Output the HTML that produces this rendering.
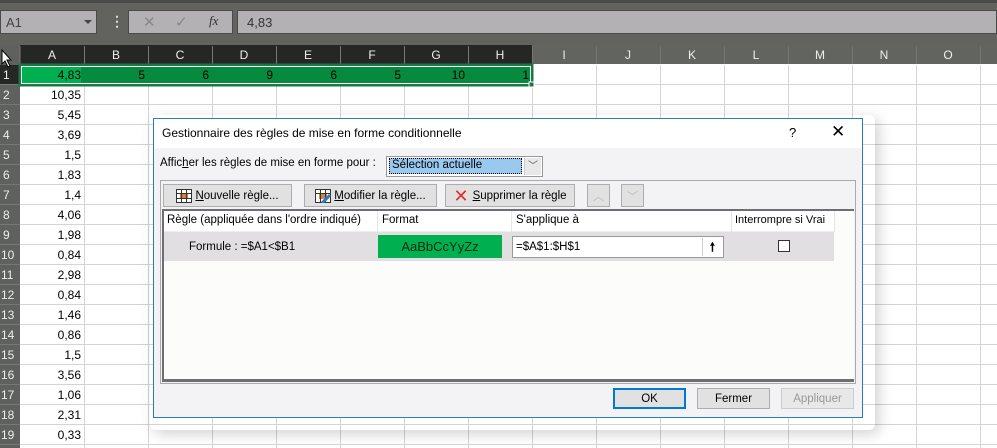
<!DOCTYPE html>
<html><head><meta charset="utf-8"><style>
*{box-sizing:border-box;margin:0;padding:0}
body{width:997px;height:448px;overflow:hidden;background:#fff;font-family:"Liberation Sans",sans-serif;position:relative}
.a{position:absolute}
.t{font-size:11.5px;color:#000;white-space:nowrap}
.btn{position:absolute;background:#e1e1e1;border:1px solid #adadad;font-size:11.5px;display:flex;align-items:center;justify-content:center;white-space:nowrap}
</style></head><body>
<div class="a" style="left:0;top:0;width:997px;height:45px;background:#62635f;border-top:3px solid #4a4a4a"></div>
<div class="a" style="left:0;top:10px;width:97px;height:24px;background:#b3b1b4;border:1px solid #4a4a4a"></div>
<div class="a t" style="left:6px;top:15px;font-size:13px;color:#444">A1</div>
<div class="a" style="left:84px;top:20px;border-left:4px solid transparent;border-right:4px solid transparent;border-top:4px solid #444"></div>
<div class="a" style="left:110px;top:13px;color:#ddd;font-size:14px;font-weight:bold">⋮</div>
<div class="a" style="left:128px;top:10px;width:105px;height:24px;background:#b3b1b4;border:1px solid #4a4a4a"></div>
<div class="a" style="left:143px;top:13px;color:#888;font-size:15px">✕</div>
<div class="a" style="left:175px;top:13px;color:#888;font-size:15px">✓</div>
<div class="a" style="left:209px;top:13px;color:#333;font-size:13px;font-style:italic;font-family:'Liberation Serif',serif">fx</div>
<div class="a" style="left:237px;top:10px;width:760px;height:24px;background:#b3b1b4;border:1px solid #4a4a4a"></div>
<div class="a t" style="left:247px;top:15px;font-size:13px;color:#333">4,83</div>
<svg class="a" style="left:0;top:45px" width="997" height="403">
<rect x="0" y="0" width="997" height="19" fill="#626460"/>
<rect x="20" y="0" width="512" height="19" fill="#252725"/>
<rect x="0" y="0" width="20" height="403" fill="#5f615e"/>
<rect x="0" y="20" width="20" height="20" fill="#252725"/>
<g stroke="#d4d4d4" stroke-width="1">
<path d="M84.5 40V403M148.5 40V403M212.5 40V403M276.5 40V403M340.5 40V403M404.5 40V403M468.5 40V403M532.5 20V403M596.5 20V403M660.5 20V403M724.5 20V403M788.5 20V403M852.5 20V403M916.5 20V403M980.5 20V403"/>
<path d="M20 59.5H997M20 79.5H997M20 99.5H997M20 119.5H997M20 139.5H997M20 159.5H997M20 179.5H997M20 199.5H997M20 219.5H997M20 239.5H997M20 259.5H997M20 279.5H997M20 299.5H997M20 319.5H997M20 339.5H997M20 359.5H997M20 379.5H997M20 399.5H997M532 39.5H997"/>
</g>
<g stroke="#777"><path d="M20 1v18M84.5 1v18M148.5 1v18M212.5 1v18M276.5 1v18M340.5 1v18M404.5 1v18M468.5 1v18M532.5 1v18M596.5 1v18M660.5 1v18M724.5 1v18M788.5 1v18M852.5 1v18M916.5 1v18M980.5 1v18"/>
<path d="M0 39.5h20M0 59.5h20M0 79.5h20M0 99.5h20M0 119.5h20M0 139.5h20M0 159.5h20M0 179.5h20M0 199.5h20M0 219.5h20M0 239.5h20M0 259.5h20M0 279.5h20M0 299.5h20M0 319.5h20M0 339.5h20M0 359.5h20M0 379.5h20M0 399.5h20"/></g>
<rect x="20" y="20" width="512" height="20" fill="#058a3e"/>
<rect x="21" y="21" width="60" height="18" fill="#00b050"/>
<rect x="19.5" y="19.5" width="513" height="21" fill="none" stroke="#217346" stroke-width="2"/>
<rect x="21.5" y="21.5" width="509" height="17" fill="none" stroke="#fff" stroke-width="1"/>
<rect x="529" y="37" width="5" height="5" fill="#217346" stroke="#fff"/>
<g font-family="Liberation Sans" font-size="12" fill="#eee" text-anchor="middle">
<text x="52" y="14">A</text><text x="116" y="14">B</text><text x="180" y="14">C</text><text x="244" y="14">D</text><text x="308" y="14">E</text><text x="372" y="14">F</text><text x="436" y="14">G</text><text x="500" y="14">H</text><text x="564" y="14">I</text><text x="628" y="14">J</text><text x="692" y="14">K</text><text x="756" y="14">L</text><text x="820" y="14">M</text><text x="884" y="14">N</text><text x="948" y="14">O</text>
</g>
<g font-family="Liberation Sans" font-size="12" fill="#eee">
<text x="3" y="34">1</text><text x="3" y="54">2</text><text x="3" y="74">3</text><text x="3" y="94">4</text><text x="3" y="114">5</text><text x="3" y="134">6</text><text x="3" y="154">7</text><text x="3" y="174">8</text><text x="3" y="194">9</text><text x="1" y="214">10</text><text x="1" y="234">11</text><text x="1" y="254">12</text><text x="1" y="274">13</text><text x="1" y="294">14</text><text x="1" y="314">15</text><text x="1" y="334">16</text><text x="1" y="354">17</text><text x="1" y="374">18</text><text x="1" y="394">19</text>
</g>
<g font-family="Liberation Sans" font-size="12" fill="#000" text-anchor="end">
<text x="81" y="34">4,83</text><text x="145" y="34">5</text><text x="209" y="34">6</text><text x="273" y="34">9</text><text x="337" y="34">6</text><text x="401" y="34">5</text><text x="465" y="34">10</text><text x="529" y="34">1</text>
<text x="81" y="54">10,35</text><text x="81" y="74">5,45</text><text x="81" y="94">3,69</text><text x="81" y="114">1,5</text><text x="81" y="134">1,83</text><text x="81" y="154">1,4</text><text x="81" y="174">4,06</text><text x="81" y="194">1,98</text><text x="81" y="214">0,84</text><text x="81" y="234">2,98</text><text x="81" y="254">0,84</text><text x="81" y="274">1,46</text><text x="81" y="294">0,86</text><text x="81" y="314">1,5</text><text x="81" y="334">3,56</text><text x="81" y="354">1,06</text><text x="81" y="374">2,31</text><text x="81" y="394">0,33</text>
</g>
<path d="M2 5v14l3-3 3 6 2-1-3-6h4z" fill="#fff" stroke="#000" stroke-width="1"/>
</svg>
<div class="a" style="left:150px;top:115px;width:725px;height:315px;box-shadow:4px 4px 14px rgba(0,0,0,.18);border-radius:6px"></div>
<div class="a" style="left:153px;top:118px;width:710px;height:300px;background:#f3f2f5;border:1px solid #2b79c9"></div>
<div class="a" style="left:154px;top:119px;width:708px;height:29px;background:#fff"></div>
<div class="a t" style="left:162px;top:126px;font-size:12px">Gestionnaire des règles de mise en forme conditionnelle</div>
<div class="a t" style="left:789px;top:125px;font-size:13px">?</div>
<div class="a t" style="left:831px;top:122px;font-size:17px;font-weight:100">✕</div>
<div class="a t" style="left:160px;top:157px">Affic<u>h</u>er les règles de mise en forme pour :</div>
<div class="a" style="left:386px;top:156px;width:157px;height:21px;background:#fff;border:1px solid #999"></div>
<div class="a" style="left:389px;top:158px;width:133px;height:16px;background:#99c9ef;border:1px dotted #000"></div>
<div class="a t" style="left:392px;top:159px">Sélection actuelle</div>
<div class="a" style="left:524px;top:158px;width:17px;height:17px;background:#e8e8e8;border-left:1px solid #ccc;font-size:10px;color:#555;text-align:center;line-height:17px">﹀</div>
<div class="a" style="left:160px;top:180px;width:696px;height:204px;border:1px solid #aaa"></div>
<div class="btn" style="left:163px;top:184px;width:129px;height:23px"><svg width="16" height="14" style="margin-right:3px;flex:none"><rect x="0.5" y="0.5" width="15" height="13" fill="#fff" stroke="#333"/><rect x="4" y="4" width="8" height="6" fill="#d9823b"/><path d="M5.5 0v14M10.5 0v14M0 4.5h16M0 9.5h16" stroke="#333"/></svg><span><u>N</u>ouvelle règle...</span></div>
<div class="btn" style="left:304px;top:184px;width:133px;height:23px"><svg width="16" height="14" style="margin-right:3px;flex:none"><rect x="0.5" y="0.5" width="15" height="13" fill="#fff" stroke="#333"/><rect x="4" y="4" width="8" height="6" fill="#d9823b"/><path d="M5.5 0v14M10.5 0v14M0 4.5h16" stroke="#333"/><path d="M7 14l8-8" stroke="#2b79c9" stroke-width="3"/></svg><span><u>M</u>odifier la règle...</span></div>
<div class="btn" style="left:445px;top:184px;width:130px;height:23px"><span style="color:#e03030;font-size:18px;margin-right:4px;line-height:14px">✕</span><span><u>S</u>upprimer la règle</span></div>
<div class="btn" style="left:587px;top:184px;width:23px;height:23px;color:#bbb;font-size:11px">︿</div>
<div class="btn" style="left:621px;top:184px;width:23px;height:23px;color:#bbb;font-size:11px">﹀</div>
<div class="a" style="left:162px;top:209px;width:692px;height:173px;background:#fcfdfb;border:2px solid #6e6e72;border-right:none;border-bottom-width:3px"></div>
<div class="a" style="left:164px;top:211px;width:670px;height:21px;background:#fff;border-bottom:1px solid #eee"></div>
<div class="a" style="left:377px;top:211px;height:21px;border-left:1px solid #e5e5e5"></div>
<div class="a" style="left:511px;top:211px;height:21px;border-left:1px solid #e5e5e5"></div>
<div class="a" style="left:731px;top:211px;height:21px;border-left:1px solid #e5e5e5"></div>
<div class="a" style="left:834px;top:211px;height:21px;border-left:1px solid #e5e5e5"></div>
<div class="a t" style="left:167px;top:214px">Règle (appliquée dans l'ordre indiqué)</div>
<div class="a t" style="left:382px;top:214px">Format</div>
<div class="a t" style="left:516px;top:214px">S'applique à</div>
<div class="a t" style="left:735px;top:214px;font-size:11px">Interrompre si Vrai</div>
<div class="a" style="left:164px;top:232px;width:670px;height:29px;background:#e2dfe3"></div>
<div class="a t" style="left:189px;top:241px">Formule : =$A1&lt;$B1</div>
<div class="a" style="left:378px;top:235px;width:124px;height:23px;background:#00b050;font-size:13px;text-align:center;line-height:23px;color:#0c2a12">AaBbCcYyZz</div>
<div class="a" style="left:512px;top:236px;width:212px;height:22px;background:#fff;border:1px solid #999"></div>
<div class="a t" style="left:516px;top:241px">=$A$1:$H$1</div>
<div class="a" style="left:702px;top:238px;width:20px;height:18px;border-left:1px solid #ccc;text-align:center;font-size:12px;font-weight:bold;line-height:18px">🠕</div>
<div class="a" style="left:778px;top:240px;width:12px;height:12px;background:#fff;border:1px solid #333"></div>
<div class="btn" style="left:613px;top:388px;width:73px;height:21px;border:2px solid #0078d7">OK</div>
<div class="btn" style="left:697px;top:388px;width:73px;height:21px">Fermer</div>
<div class="btn" style="left:781px;top:388px;width:73px;height:21px;color:#999;background:#e8e8e8;border-color:#ccc">Appliquer</div>
</body></html>
